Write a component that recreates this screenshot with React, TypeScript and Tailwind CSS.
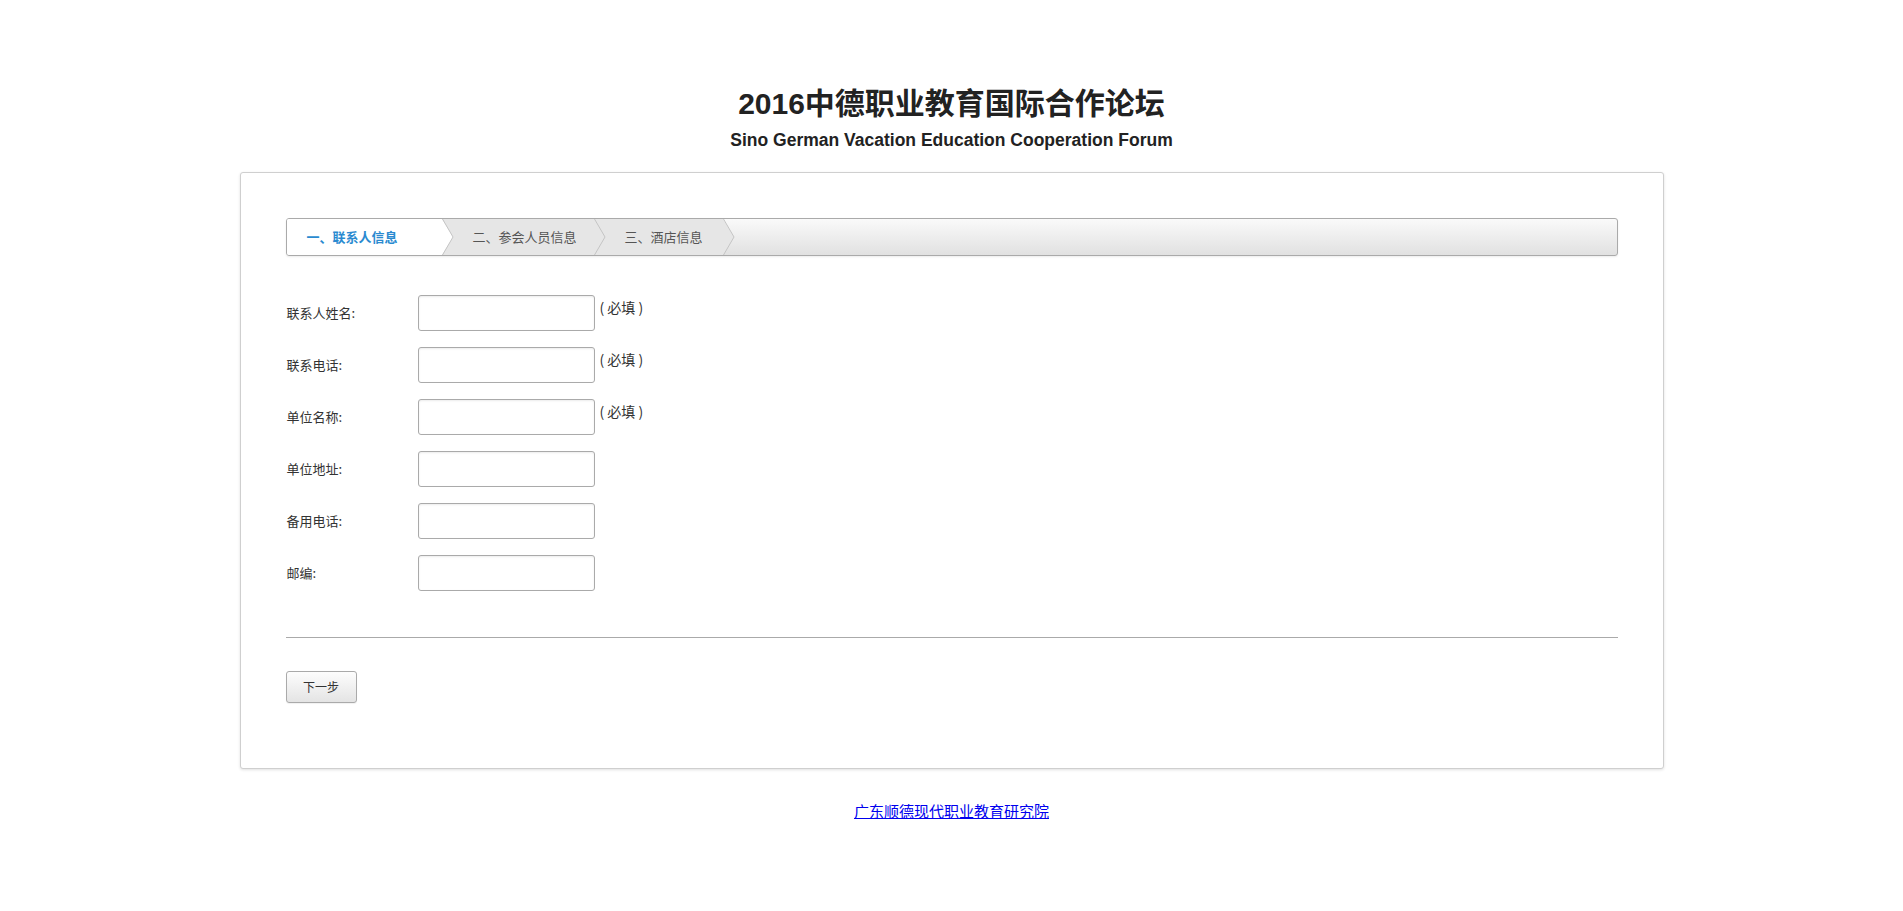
import React from "react";

const cjk = { fontFamily: '"Microsoft YaHei", "Noto Sans CJK SC", "Liberation Sans", sans-serif' };
const latin = { fontFamily: '"Liberation Sans", Arial, "Noto Sans CJK SC", sans-serif' };

function Chevron({ fill }: { fill: string }) {
  return (
    <svg className="absolute left-full top-0" width="12" height="36" viewBox="0 0 12 36">
      <polygon points="0,0 11,18 0,36" fill={fill} />
      <polyline points="0.5,0 11,18 0.5,36" fill="none" stroke="#c4c4c4" strokeWidth="1" />
    </svg>
  );
}

const rows: { label: string; required: boolean }[] = [
  { label: "联系人姓名:", required: true },
  { label: "联系电话:", required: true },
  { label: "单位名称:", required: true },
  { label: "单位地址:", required: false },
  { label: "备用电话:", required: false },
  { label: "邮编:", required: false },
];

export default function App() {
  return (
    <div className="min-h-[911px] bg-white pt-[86px]" style={latin}>
      <h1 className="text-center text-[30px] leading-[36px] font-bold text-[#222]" style={latin}>
        2016中德职业教育国际合作论坛
      </h1>
      <h2 className="mt-[8px] text-center text-[17.5px] leading-[21px] font-bold text-[#222]" style={latin}>
        Sino German Vacation Education Cooperation Forum
      </h2>

      <div className="mx-auto mt-[21px] w-[1424px] rounded-[3px] border border-[#cfcfcf] bg-white px-[45px] pt-[45px] pb-[65px] shadow-[0_1px_3px_rgba(0,0,0,0.12)]">
        <div className="flex h-[38px] overflow-hidden rounded-[3px] border border-[#aaa] bg-gradient-to-b from-[#fafafa] to-[#e1e1e1] shadow-[0_1px_2px_rgba(0,0,0,0.08)]" style={cjk}>
          <div className="relative z-30 flex w-[155px] items-center bg-white pl-[20px] text-[13px] font-bold text-[#2a8ad0]">
            一、联系人信息
            <Chevron fill="#ffffff" />
          </div>
          <div className="relative z-20 flex w-[152px] items-center bg-[#e6e6e6] pl-[31px] text-[13px] text-[#555]">
            二、参会人员信息
            <Chevron fill="#e6e6e6" />
          </div>
          <div className="relative z-10 flex w-[129px] items-center bg-[#e6e6e6] pl-[31px] text-[13px] text-[#555]">
            三、酒店信息
            <Chevron fill="#e6e6e6" />
          </div>
        </div>

        <div className="mt-[39px] flex flex-col gap-[16px]" style={cjk}>
          {rows.map((r) => (
            <div key={r.label} className="flex items-start">
              <div className="flex h-[36px] w-[132px] items-center pl-[1px] text-[13px] text-[#333]">{r.label}</div>
              <input
                type="text"
                className="h-[36px] w-[177px] rounded-[3px] border border-[#aaa] bg-white shadow-[inset_0_1px_2px_rgba(0,0,0,0.08)] outline-none"
              />
              {r.required && (
                <span className="ml-[5px] mt-[2px] whitespace-pre text-[14px] leading-[20px] text-[#333]">( 必填 )</span>
              )}
            </div>
          ))}
        </div>

        <div className="mt-[46px] h-px bg-[#aaa]" />

        <button
          className="mt-[33px] flex h-[32px] w-[71px] items-center justify-center rounded-[3px] border border-[#aaa] bg-gradient-to-b from-[#fdfdfd] to-[#e4e4e4] text-[12px] text-[#333] shadow-[0_1px_1px_rgba(0,0,0,0.06)]"
          style={cjk}
        >
          下一步
        </button>
      </div>

      <div className="mt-[32px] text-center text-[15px] leading-[20px]" style={cjk}>
        <a href="#" className="text-[#0000ee] underline">
          广东顺德现代职业教育研究院
        </a>
      </div>
    </div>
  );
}
